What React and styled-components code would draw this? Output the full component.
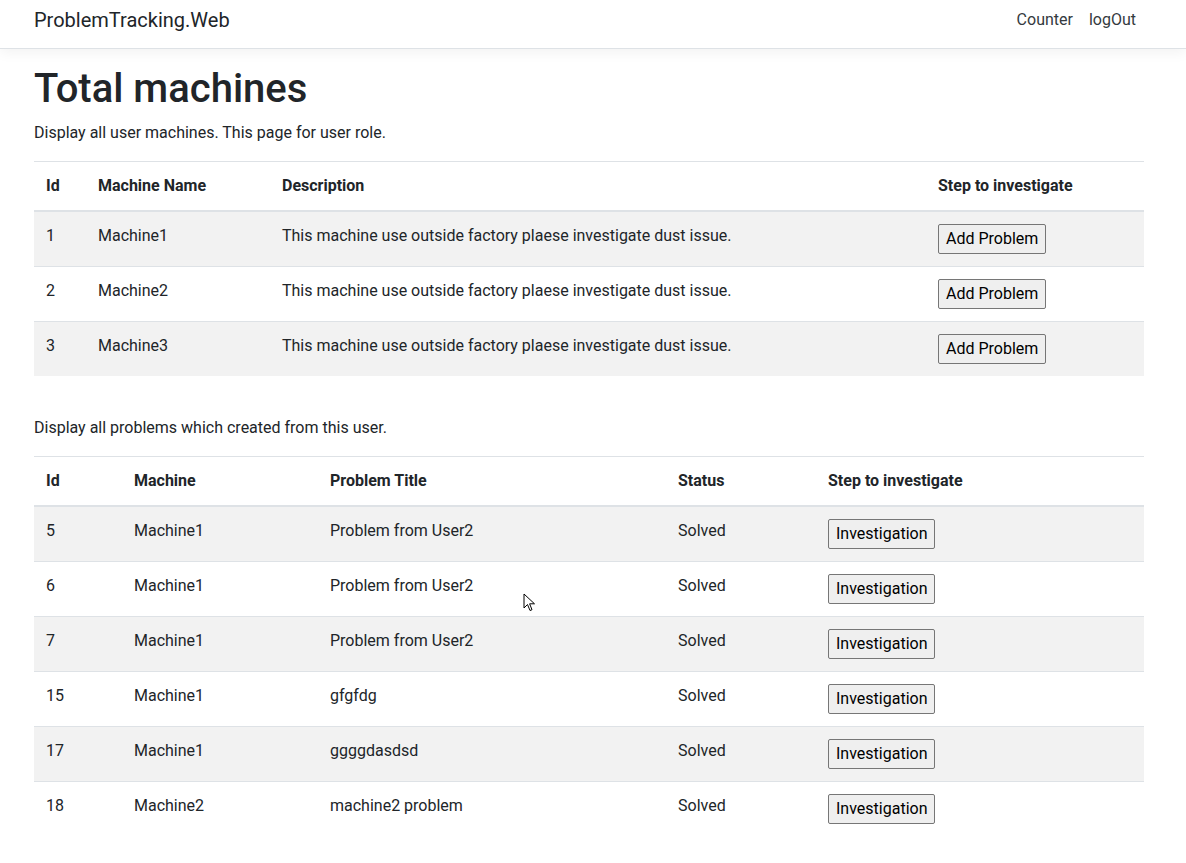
import React from 'react';
import styled, { createGlobalStyle } from 'styled-components';

const GlobalStyle = createGlobalStyle`
  body {
    margin: 0;
    font-family: Roboto, "Liberation Sans", Arial, sans-serif;
    font-size: 16px;
    line-height: 1.5;
    color: #212529;
    background: #fff;
  }
`;

const Navbar = styled.nav`
  height: 43px;
  display: flex;
  justify-content: space-between;
  align-items: flex-start;
  padding: 5px 42px 0 34px;
  background: #fff;
  border-bottom: 1px solid #dee2e6;
  box-shadow: 0 4px 12px rgba(0, 0, 0, 0.05);
  margin-bottom: 16px;
`;

const Brand = styled.a`
  font-size: 20px;
  line-height: 30px;
  color: #212529;
  text-decoration: none;
`;

const NavList = styled.ul`
  list-style: none;
  display: flex;
  margin: 0;
  padding: 3px 0 0;
`;

const NavLink = styled.a`
  display: block;
  padding: 0 8px;
  color: #343a40;
  text-decoration: none;
`;

const Container = styled.main`
  width: 1110px;
  margin-left: 34px;
`;

const Title = styled.h1`
  font-size: 40px;
  font-weight: 500;
  line-height: 1.2;
  margin: 1px 0 8px;
`;

const Lead = styled.p`
  margin: 0 0 16px;
`;

const Spaced = styled(Lead)`
  margin-top: 40px;
`;

const Table = styled.table`
  width: 100%;
  border-collapse: collapse;
  table-layout: fixed;
`;

const Col = styled.col`
  width: ${p => p.$w}px;
`;

const Th = styled.th`
  text-align: left;
  font-weight: 700;
  padding: 12px;
  border-top: 1px solid #dee2e6;
  border-bottom: 2px solid #dee2e6;
  vertical-align: bottom;
`;

const Row = styled.tr`
  &:nth-child(odd) {
    background: rgba(0, 0, 0, 0.05);
  }
`;

const Td = styled.td`
  padding: 12px;
  vertical-align: top;
  border-top: 1px solid #dee2e6;
`;

const Button = styled.button`
  font: inherit;
  line-height: 24px;
  color: #000;
  background: #efefef;
  border: 1px solid #767676;
  border-radius: 2px;
  padding: 2px 7px;
  margin: 0;
`;

const Cursor = styled.svg`
  position: absolute;
  left: 523px;
  top: 593px;
`;

const machines = [
  { id: 1, name: 'Machine1' },
  { id: 2, name: 'Machine2' },
  { id: 3, name: 'Machine3' },
];

const problems = [
  { id: 5, machine: 'Machine1', title: 'Problem from User2' },
  { id: 6, machine: 'Machine1', title: 'Problem from User2' },
  { id: 7, machine: 'Machine1', title: 'Problem from User2' },
  { id: 15, machine: 'Machine1', title: 'gfgfdg' },
  { id: 17, machine: 'Machine1', title: 'ggggdasdsd' },
  { id: 18, machine: 'Machine2', title: 'machine2 problem' },
];

const desc = 'This machine use outside factory plaese investigate dust issue.';

export default function App() {
  return (
    <>
      <GlobalStyle />
      <Navbar>
        <Brand href="#">ProblemTracking.Web</Brand>
        <NavList>
          <li><NavLink href="#">Counter</NavLink></li>
          <li><NavLink href="#">logOut</NavLink></li>
        </NavList>
      </Navbar>
      <Container>
        <Title>Total machines</Title>
        <Lead>Display all user machines. This page for user role.</Lead>
        <Table>
          <colgroup>
            <Col $w={52} />
            <Col $w={184} />
            <Col $w={656} />
            <Col $w={218} />
          </colgroup>
          <thead>
            <tr>
              <Th>Id</Th>
              <Th>Machine Name</Th>
              <Th>Description</Th>
              <Th>Step to investigate</Th>
            </tr>
          </thead>
          <tbody>
            {machines.map(m => (
              <Row key={m.id}>
                <Td>{m.id}</Td>
                <Td>{m.name}</Td>
                <Td>{desc}</Td>
                <Td><Button>Add Problem</Button></Td>
              </Row>
            ))}
          </tbody>
        </Table>
        <Spaced>Display all problems which created from this user.</Spaced>
        <Table>
          <colgroup>
            <Col $w={88} />
            <Col $w={196} />
            <Col $w={348} />
            <Col $w={150} />
            <Col $w={328} />
          </colgroup>
          <thead>
            <tr>
              <Th>Id</Th>
              <Th>Machine</Th>
              <Th>Problem Title</Th>
              <Th>Status</Th>
              <Th>Step to investigate</Th>
            </tr>
          </thead>
          <tbody>
            {problems.map(p => (
              <Row key={p.id}>
                <Td>{p.id}</Td>
                <Td>{p.machine}</Td>
                <Td>{p.title}</Td>
                <Td>Solved</Td>
                <Td><Button>Investigation</Button></Td>
              </Row>
            ))}
          </tbody>
        </Table>
      </Container>
      <Cursor width="13" height="20" viewBox="0 0 13 20">
        <path d="M1 1 L1 15 L4.5 11.5 L7 17.5 L9 16.7 L6.6 10.8 L11.5 10.8 Z" fill="#fff" stroke="#000" strokeWidth="1" strokeLinejoin="miter" />
      </Cursor>
    </>
  );
}
